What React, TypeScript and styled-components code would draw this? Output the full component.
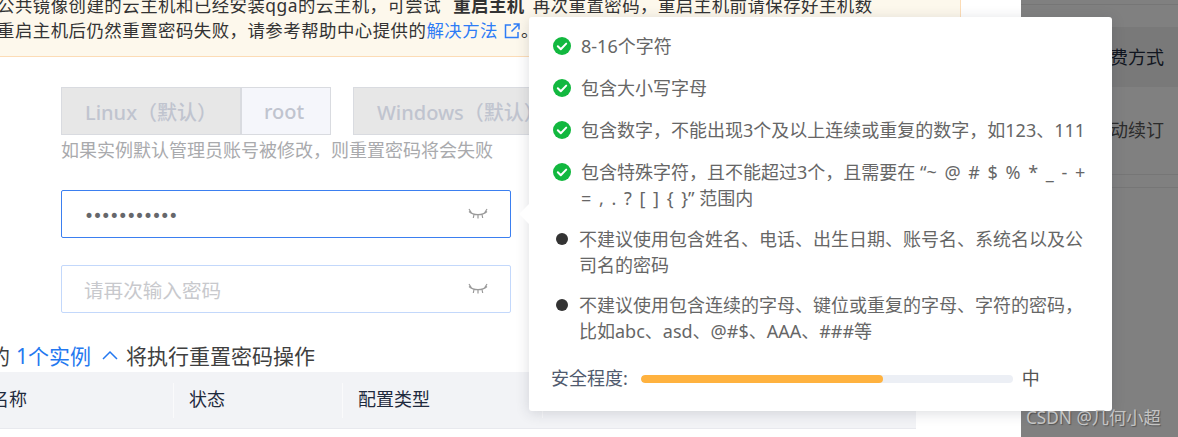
import React from "react";
import styled, { createGlobalStyle } from "styled-components";

const Global = createGlobalStyle`
  html, body { margin: 0; padding: 0; background: #fff; }
  body { font-family: "Noto Sans", "Noto Sans CJK SC", sans-serif; }
  #root { width: 1178px; height: 437px; overflow: hidden; }
`;

const Page = styled.div`
  position: relative;
  display: flex;
  width: 1178px;
  height: 437px;
  overflow: hidden;
`;

const Modal = styled.main`
  width: 1021px;
  flex: none;
  height: 437px;
  overflow: hidden;
  background: #fff;
`;

const Notice = styled.section`
  box-sizing: border-box;
  width: 961px;
  height: 64px;
  margin-top: -7px;
  margin-bottom: 30px;
  background: #fdf8ec;
  border-right: 1px solid #fcdcb6;
  border-bottom: 1px solid #fcdcb6;
  font-size: 17.4px;
  line-height: 25px;
  color: #333;
  white-space: nowrap;
  overflow: hidden;
`;

const NoticeLine = styled.div<{ $shift: number }>`
  margin-left: ${(p) => p.$shift}px;
  letter-spacing: 0.5px;
`;

const Strong = styled.strong`
  font-weight: 700;
  margin: 0 8px 0 12px;
`;

const BlueLink = styled.span`
  color: #2e7cf6;
`;

const LinkIcon = styled.svg`
  width: 18px;
  height: 18px;
  margin-left: 5px;
  vertical-align: -3px;
`;

const Form = styled.div`
  padding-left: 61px;
`;

const TabRow = styled.div`
  display: flex;
  height: 48px;
`;

const Tab = styled.div<{ $w: number; $grey?: boolean; $gap?: number }>`
  box-sizing: border-box;
  flex: none;
  width: ${(p) => p.$w}px;
  margin-left: ${(p) => p.$gap ?? 0}px;
  padding: ${(p) => (p.$grey ? "0 0 0 23px" : "0 4px 0 0")};
  display: flex;
  align-items: center;
  justify-content: ${(p) => (p.$grey ? "flex-start" : "center")};
  border: 1px solid #d9dbe0;
  background: ${(p) => (p.$grey ? "#e7e7e7" : "#f5f6fb")};
  color: #c0c4cf;
  font-size: 20px;
  font-weight: 500;
  white-space: nowrap;
`;

const Hint = styled.p`
  margin: 2px 0 0;
  height: 26px;
  font-size: 18px;
  line-height: 26px;
  color: #a9aaad;
  white-space: nowrap;
`;

const Field = styled.div<{ $active?: boolean; $top: number }>`
  box-sizing: border-box;
  width: 450px;
  height: 48px;
  margin-top: ${(p) => p.$top}px;
  padding: 0 22px;
  display: flex;
  align-items: center;
  justify-content: space-between;
  border-radius: 2px;
  border: 1px solid ${(p) => (p.$active ? "#3b7ff0" : "#c3d8fb")};
`;

const Dots = styled.span`
  padding-top: 3px;
  color: #66676b;
  font-size: 17px;
  letter-spacing: -1.6px;
  font-family: "DejaVu Sans", sans-serif;
`;

const Placeholder = styled.span`
  color: #c8c9cd;
  font-size: 19.6px;
`;

const Eye = styled.svg`
  width: 20px;
  height: 12px;
  flex: none;
`;

const Summary = styled.div`
  margin: 28px 0 0 -72px;
  height: 28px;
  display: flex;
  align-items: center;
  font-size: 21px;
  color: #3f3f3f;
  white-space: nowrap;
`;

const CountLink = styled.span`
  color: #2478f0;
  margin: 0 11px 0 6px;
`;

const Chevron = styled.svg`
  width: 16px;
  height: 10px;
  margin-right: 8px;
`;

const TableHead = styled.div`
  box-sizing: border-box;
  margin-top: 3px;
  height: 57px;
  width: 916px;
  display: flex;
  align-items: center;
  background: #f2f3f6;
  border-bottom: 1px solid #e8e9ee;
  overflow: hidden;
`;

const HeadCell = styled.div<{ $w: number; $first?: boolean }>`
  box-sizing: border-box;
  flex: none;
  width: ${(p) => p.$w}px;
  height: 35px;
  line-height: 33px;
  padding-left: ${(p) => (p.$first ? 0 : 15)}px;
  margin-left: ${(p) => (p.$first ? -9 : 0)}px;
  border-right: 1px solid #fafafb;
  color: #1f2a3d;
  font-size: 18px;
  white-space: nowrap;
`;

const Side = styled.aside`
  flex: 1;
  height: 437px;
  background: #808080;
  overflow: hidden;
`;

const SideRule = styled.div<{ $top: number }>`
  height: 1px;
  background: #767676;
  margin-top: ${(p) => p.$top}px;
`;

const SideHead = styled.div`
  box-sizing: border-box;
  margin-top: 22px;
  height: 60px;
  background: #797979;
  padding-left: 89px;
  line-height: 60px;
  color: #101520;
  font-size: 18px;
  white-space: nowrap;
`;

const SideRow = styled.div`
  box-sizing: border-box;
  height: 87px;
  padding: 18px 0 0 89px;
  line-height: 50px;
  color: #2b2b2b;
  font-size: 18px;
  white-space: nowrap;
`;

const Popover = styled.div`
  position: absolute;
  left: 529px;
  top: 17px;
  box-sizing: border-box;
  width: 583px;
  height: 394px;
  padding: 16px 22px 0 24px;
  background: #fff;
  border-radius: 3px;
  box-shadow: 0 2px 14px rgba(40, 45, 60, 0.16);
`;

const Arrow = styled.span`
  position: absolute;
  left: -7px;
  top: 190px;
  width: 14px;
  height: 14px;
  background: #fff;
  transform: rotate(45deg);
`;

const Rule = styled.div<{ $bottom: number }>`
  display: flex;
  align-items: flex-start;
  margin-bottom: ${(p) => p.$bottom}px;
  color: #666;
  font-size: 18px;
  line-height: 26px;
`;

const RuleIcon = styled.svg`
  width: 18px;
  height: 18px;
  flex: none;
  margin: 4px 10px 0 0;
`;

const Bullet = styled.span`
  flex: none;
  width: 12px;
  height: 12px;
  margin: 7px 11px 0 3px;
  border-radius: 50%;
  background: #333;
`;

const Symbols = styled.span`
  word-spacing: 3px;
`;

const Strength = styled.div`
  display: flex;
  align-items: center;
  margin: 20px 0 0 -2px;
  height: 26px;
  color: #4f5a6e;
  font-size: 18px;
  white-space: nowrap;
`;

const Track = styled.div`
  width: 372px;
  height: 8px;
  margin: 3px 9px 0 13px;
  background: #eceff5;
  border-radius: 4px;
  overflow: hidden;
`;

const Fill = styled.div`
  height: 100%;
  background: #ffb23f;
  border-radius: 4px;
`;

const Level = styled.span`
  color: #555;
`;

const Watermark = styled.div`
  position: absolute;
  left: 1026px;
  top: 406px;
  line-height: 24px;
  color: #c4c4c4;
  font-size: 17.2px;
  white-space: nowrap;
  text-shadow: 1px 1px 1px rgba(0, 0, 0, 0.35);
`;

const Check = () => (
  <RuleIcon viewBox="0 0 18 18">
    <circle cx="9" cy="9" r="9" fill="#12b83f" />
    <path d="M4.8 9.2l3 3 5.4-5.6" fill="none" stroke="#fff" strokeWidth="2" strokeLinecap="round" strokeLinejoin="round" />
  </RuleIcon>
);

const ClosedEye = () => (
  <Eye viewBox="0 0 20 12">
    <path
      d="M1 3.500c2.500 2.200 5.500 3.200 9 3.200s6.500-1 9-3.200M1 1l2.500 4M19 1l-2.500 4M6 6.500L5.300 10M14 6.500l.7 3.500M10 7v3.500"
      fill="none"
      stroke="#9a9a9a"
      strokeWidth="1.200"
    />
  </Eye>
);

const strength = 0.65;

export default function App() {
  return (
    <Page>
      <Global />
      <Modal>
        <Notice>
          <NoticeLine $shift={-3}>
            公共镜像创建的云主机和已经安装qga的云主机，可尝试<Strong>重启主机</Strong>再次重置密码，重启主机前请保存好主机数
          </NoticeLine>
          <NoticeLine $shift={-3}>
            重启主机后仍然重置密码失败，请参考帮助中心提供的
            <BlueLink>
              解决方法
              <LinkIcon viewBox="0 0 18 18">
                <path d="M8 3H2.500v12.500H15V10M10.500 2H16v5.500M16 2L8.500 9.500" fill="none" stroke="#2e7cf6" strokeWidth="1.500" />
              </LinkIcon>
            </BlueLink>
            。
          </NoticeLine>
        </Notice>
        <Form>
          <TabRow>
            <Tab $w={180} $grey>Linux（默认）</Tab>
            <Tab $w={90}>root</Tab>
            <Tab $w={180} $grey $gap={22}>Windows（默认）</Tab>
          </TabRow>
          <Hint>如果实例默认管理员账号被修改，则重置密码将会失败</Hint>
          <Field $active $top={27}>
            <Dots>•••••••••••</Dots>
            <ClosedEye />
          </Field>
          <Field $top={27}>
            <Placeholder>请再次输入密码</Placeholder>
            <ClosedEye />
          </Field>
          <Summary>
            的
            <CountLink>1个实例</CountLink>
            <Chevron viewBox="0 0 16 10">
              <path d="M1 9l7-7 7 7" fill="none" stroke="#2478f0" strokeWidth="1.500" />
            </Chevron>
            将执行重置密码操作
          </Summary>
        </Form>
        <TableHead>
          <HeadCell $first $w={183}>名称</HeadCell>
          <HeadCell $w={169}>状态</HeadCell>
          <HeadCell $w={200}>配置类型</HeadCell>
        </TableHead>
      </Modal>
      <Side>
        <SideRule $top={4} />
        <SideHead>费方式</SideHead>
        <SideRow>动续订</SideRow>
        <SideRule $top={0} />
        <SideRule $top={12} />
      </Side>
      <Popover>
        <Arrow />
        <Rule $bottom={16}>
          <Check />
          <span>8-16个字符</span>
        </Rule>
        <Rule $bottom={16}>
          <Check />
          <span>包含大小写字母</span>
        </Rule>
        <Rule $bottom={16}>
          <Check />
          <span>包含数字，不能出现3个及以上连续或重复的数字，如123、111</span>
        </Rule>
        <Rule $bottom={15}>
          <Check />
          <span>
            包含特殊字符，且不能超过3个，且需要在 <Symbols>“~ @ # $ % * _ - +</Symbols>
            <br />
            <Symbols>= , . ? [ ] {"{ }"}”</Symbols> 范围内
          </span>
        </Rule>
        <Rule $bottom={14}>
          <Bullet />
          <span>不建议使用包含姓名、电话、出生日期、账号名、系统名以及公司名的密码</span>
        </Rule>
        <Rule $bottom={14}>
          <Bullet />
          <span>不建议使用包含连续的字母、键位或重复的字母、字符的密码，比如abc、asd、@#$、AAA、###等</span>
        </Rule>
        <Strength>
          安全程度:
          <Track>
            <Fill style={{ width: `${strength * 100}%` }} />
          </Track>
          <Level>中</Level>
        </Strength>
      </Popover>
      <Watermark>CSDN @几何小超</Watermark>
    </Page>
  );
}
